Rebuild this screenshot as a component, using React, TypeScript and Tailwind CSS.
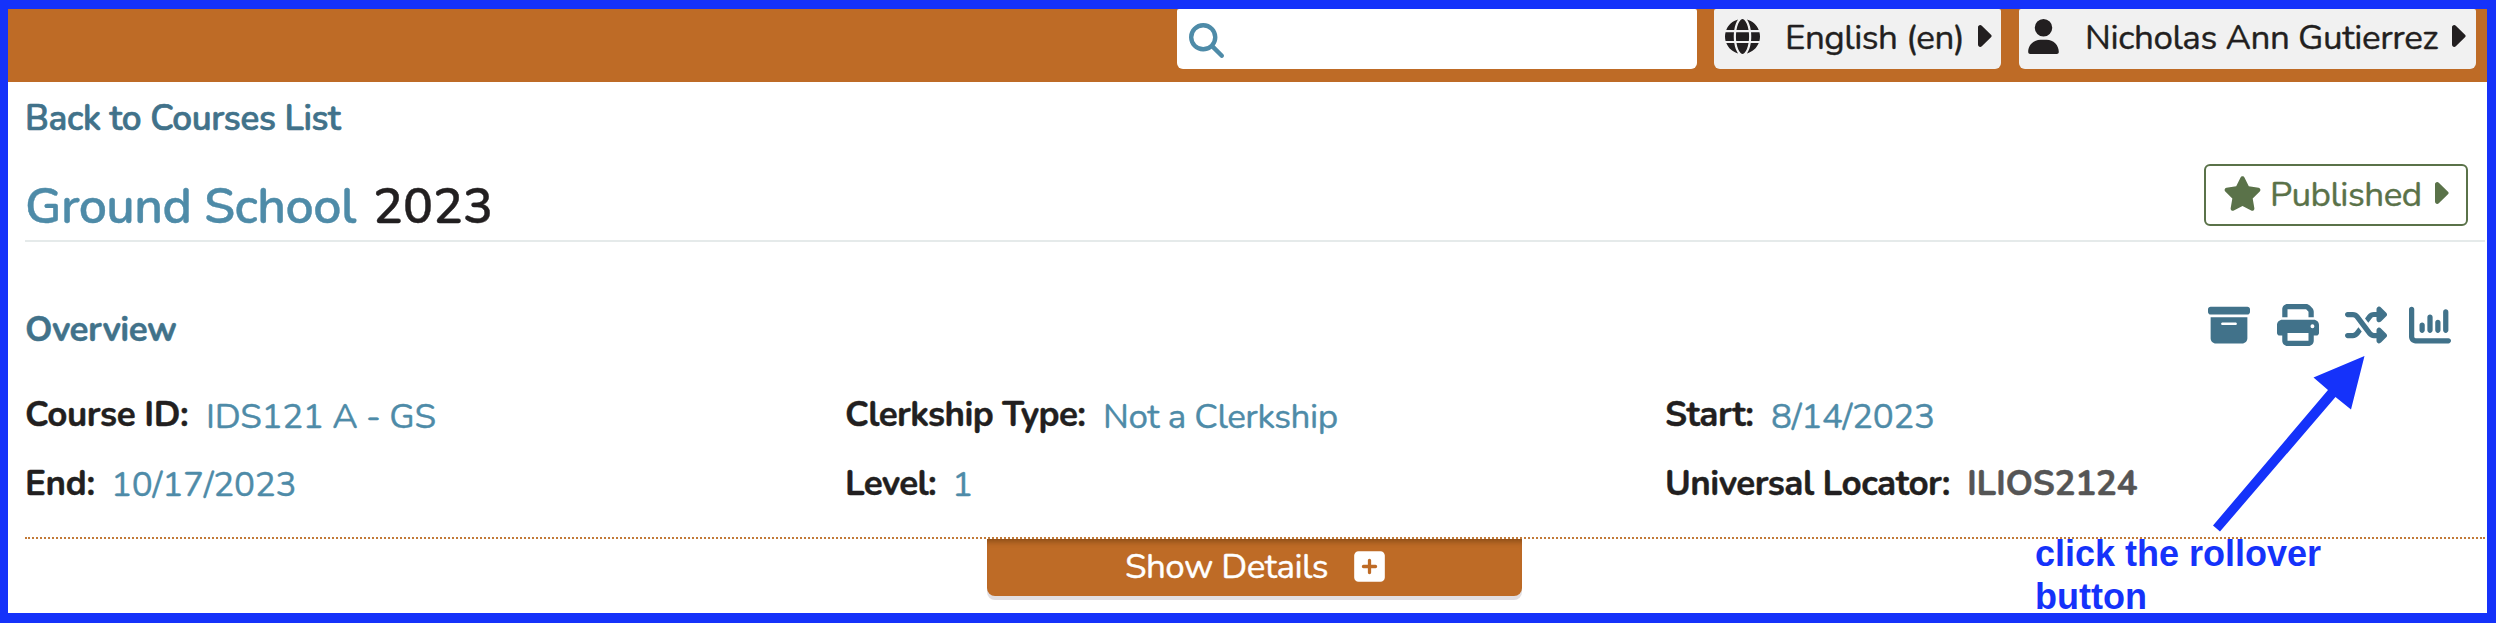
import type { ReactNode } from 'react';
import {
  FaBoxArchive,
  FaChartColumn,
  FaGlobe,
  FaMagnifyingGlass,
  FaPrint,
  FaShuffle,
  FaSquarePlus,
  FaStar,
  FaUser,
} from 'react-icons/fa6';

function Caret({ className = '' }: { className?: string }) {
  return (
    <svg viewBox="0 0 14 22" className={`h-[22px] w-[14px] shrink-0 fill-current ${className}`}>
      <path d="M0 2.4C0 .4 2.300 -.7 3.800 .8L13 9.700C13.800 10.400 13.800 11.600 13 12.300L3.800 21.200C2.300 22.700 0 21.600 0 19.600Z" />
    </svg>
  );
}

function Field({ label, labelClass, children }: { label: string; labelClass: string; children: ReactNode }) {
  return (
    <div className="flex h-11 items-start">
      <span className={`shrink-0 font-bold text-[#221f20] ${labelClass}`}>{label}</span>
      {children}
    </div>
  );
}

function Header() {
  return (
    <header className="flex h-[73px] items-start justify-end bg-[#be6b26] pr-[11px] text-[#221f20]">
      <div className="flex h-[60px] w-[520px] rounded-t-[2px] rounded-b-[6px] bg-white pt-[14px] pl-[12px]">
        <FaMagnifyingGlass className="size-[35px] text-[#4e8ba8]" />
      </div>
      <button className="ml-[17px] flex h-[60px] w-[287px] items-center rounded-t-[2px] rounded-b-[6px] bg-[#f1f1f1] pr-[9px] pb-[7px] pl-[11px]">
        <FaGlobe className="mt-px size-[35px]" />
        <span className="mt-[4px] ml-[25px] tracking-[-0.5px]">English (en)</span>
        <Caret className="ml-auto" />
      </button>
      <button className="ml-[18px] flex h-[60px] w-[457px] items-center rounded-t-[2px] rounded-b-[6px] bg-[#f1f1f1] pr-[10px] pb-[7px] pl-[7px]">
        <FaUser className="mt-px size-[35px]" />
        <span className="mt-[4px] ml-[24px] tracking-[-0.43px]">Nicholas Ann Gutierrez</span>
        <Caret className="ml-auto" />
      </button>
    </header>
  );
}

export default function App() {
  return (
    <div className="relative h-[624px] w-[2496px] overflow-hidden bg-white pb-px font-['Nunito','Nunito_Sans','Lato',sans-serif] text-[35px] leading-[44px] whitespace-nowrap [-webkit-text-stroke:0.4px]">
      <div className="flex h-[623px] flex-col border-t-9 border-r-9 border-b-10 border-l-8 border-[#1532fa]">
        <Header />
        <main className="flex flex-col pr-[2px] pl-[17px]">
          <a className="mt-[15px] h-11 font-semibold tracking-[-0.34px] text-[#41728a] [-webkit-text-stroke:0.7px]">Back to Courses List</a>

          <div className="flex h-[101px] items-start justify-between border-b-2 border-[#e5eaea] pr-[17px]">
            <h1 className="flex pt-[36px] text-[50px] leading-[60px] font-[580]">
              <span className="w-[348px] tracking-[-0.58px] text-[#4e8ba8]">Ground School</span>
              <span className="text-[#221f20]">2023</span>
            </h1>
            <button className="mt-[23px] flex h-[62px] w-[264px] items-center rounded-[6px] border-2 border-[#5a7249] pr-[17px] pl-[17px] text-[#5a7249]">
              <FaStar className="mb-[3px] h-[35px] w-[39px]" />
              <span className="ml-[8px] tracking-[-0.5px]">Published</span>
              <Caret className="mb-[4px] ml-auto" />
            </button>
          </div>

          <div className="mt-[62px] flex h-12 items-start justify-between pr-[34px] text-[#41728a]">
            <h2 className="pt-[4px] font-bold tracking-[-0.48px]">Overview</h2>
            <div className="flex text-[42px]">
              <FaBoxArchive />
              <FaPrint className="ml-[27px]" />
              <FaShuffle className="ml-[26px]" />
              <FaChartColumn className="ml-[22px]" />
            </div>
          </div>

          <section className="mt-[41px] grid h-[146px] auto-rows-[69px] grid-cols-3 border-b-2 border-dotted border-[#c27a38]">
            <Field label="Course ID:" labelClass="w-[181px] tracking-[-0.4px]">
              <span className="mt-[2px] tracking-[-0.33px] text-[#4e8ba8]">IDS121 A - GS</span>
            </Field>
            <Field label="Clerkship Type:" labelClass="w-[258px] tracking-[-0.58px]">
              <span className="mt-[2px] tracking-[-0.45px] text-[#4e8ba8]">Not a Clerkship</span>
            </Field>
            <Field label="Start:" labelClass="w-[106px] tracking-[-0.5px]">
              <span className="mt-[2px] tracking-[-0.35px] text-[#4e8ba8]">8/14/2023</span>
            </Field>
            <Field label="End:" labelClass="w-[86px] tracking-[-0.3px]">
              <span className="mt-px tracking-[-0.25px] text-[#4e8ba8]">10/17/2023</span>
            </Field>
            <Field label="Level:" labelClass="w-[107px] tracking-[-0.68px]">
              <span className="mt-px text-[#4e8ba8]">1</span>
            </Field>
            <Field label="Universal Locator:" labelClass="w-[302px] tracking-[-0.52px]">
              <span className="font-bold tracking-[-0.3px] text-[#555]">ILIOS2124</span>
            </Field>
          </section>

          <button className="ml-[962px] flex h-[57px] w-[535px] items-start rounded-b-[8px] bg-[#be6b26] pt-[6px] pl-[138px] text-white shadow-[0_4px_0_#e2dfe2,inset_0_7px_6px_-5px_rgba(60,30,0,0.45)]">
            <span className="w-[202px] tracking-[-0.55px]">Show Details</span>
            <FaSquarePlus className="mt-[4px] ml-[25px] size-[35px]" />
          </button>
        </main>
      </div>

      <svg
        viewBox="0 0 160 180"
        className="absolute top-[354px] left-[2208px] h-[180px] w-[160px] fill-[#1532fa]"
      >
        <path d="M156.500 2L105.500 23.500L120 36L5 171.500L12 177.500L127.500 43L143 55.500Z" />
      </svg>
      <p className="absolute top-[532px] left-[2035px] font-['Liberation_Sans',sans-serif] text-[36px] leading-[43px] font-bold text-[#1532fa] [-webkit-text-stroke:0]">
        click the rollover
        <br />
        button
      </p>
    </div>
  );
}
